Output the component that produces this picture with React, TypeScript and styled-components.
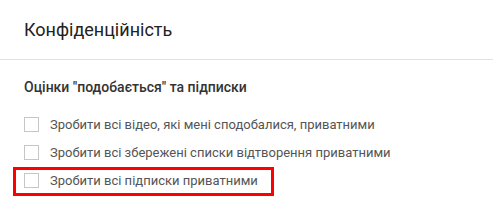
import styled, { createGlobalStyle } from 'styled-components';

const GlobalStyle = createGlobalStyle`
  html, body {
    margin: 0;
    padding: 0;
    background: #fff;
  }
  body {
    font-family: Roboto, "Noto Sans", Arial, sans-serif;
  }
`;

const Page = styled.div`
  width: 493px;
  height: 209px;
  background: #fff;
  overflow: hidden;
`;

const Header = styled.div`
  height: 60px;
  padding: 0 24px;
  display: flex;
  align-items: center;
  border-bottom: 1px solid #e2e2e2;
  box-sizing: border-box;
`;

const Title = styled.h1`
  margin: 0;
  font-size: 18px;
  font-weight: 400;
  color: #222;
`;

const Section = styled.div`
  padding: 19px 24px 0;
`;

const SectionTitle = styled.h2`
  margin: 0 0 19px;
  font-size: 14px;
  font-weight: 500;
  color: #333;
  line-height: 16px;
`;

const List = styled.div`
  display: flex;
  flex-direction: column;
  align-items: flex-start;
  gap: 8px;
`;

const Row = styled.label<{ $highlighted?: boolean }>`
  position: relative;
  display: inline-flex;
  align-items: center;
  gap: 11px;
  height: 20px;
  font-size: 13px;
  color: #555;
  cursor: pointer;

  ${({ $highlighted }) =>
    $highlighted &&
    `
    &::after {
      content: '';
      position: absolute;
      left: -11px;
      right: -16px;
      top: -3px;
      bottom: -6px;
      border: 3px solid #ff0000;
      pointer-events: none;
    }
  `}
`;

const Box = styled.span`
  width: 13px;
  height: 13px;
  border: 1px solid #c6c6c6;
  background: #fff;
  flex-shrink: 0;
`;

const items = [
  'Зробити всі відео, які мені сподобалися, приватними',
  'Зробити всі збережені списки відтворення приватними',
  'Зробити всі підписки приватними',
];

export default function App() {
  return (
    <Page>
      <GlobalStyle />
      <Header>
        <Title>Конфіденційність</Title>
      </Header>
      <Section>
        <SectionTitle>Оцінки "подобається" та підписки</SectionTitle>
        <List>
          {items.map((text, i) => (
            <Row key={text} $highlighted={i === 2}>
              <Box />
              {text}
            </Row>
          ))}
        </List>
      </Section>
    </Page>
  );
}
